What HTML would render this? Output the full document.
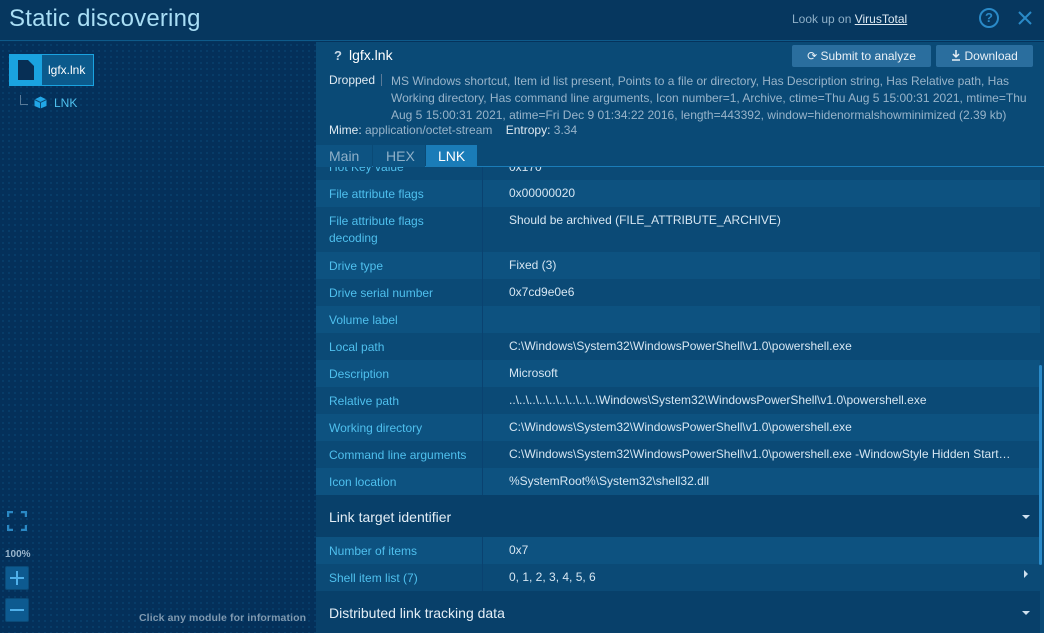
<!DOCTYPE html><html><head><style>
*{margin:0;padding:0;box-sizing:border-box}
body{width:1044px;height:633px;overflow:hidden;background:#05335c;font-family:"Liberation Sans",sans-serif;position:relative}
.hdr{position:absolute;left:0;top:0;width:1044px;height:41px;background:#06375f;border-bottom:1px solid #0e5a8a}
.hdr h1{position:absolute;left:9px;top:5px;font-size:24px;font-weight:normal;color:#a9def5;letter-spacing:0.2px}
.left{position:absolute;left:0;top:42px;width:316px;height:591px;background-color:#04305a;background-image:radial-gradient(#08406c 0.8px,transparent 1px);background-size:6px 6px}
.right{position:absolute;left:316px;top:42px;width:728px;height:591px;background:#0a4a76}
.row{position:absolute;left:316px;width:724px;font-size:12px;color:#d6e6f2}
.row .l{position:absolute;left:13px;color:#4fc0ee}
.row .v{position:absolute;left:193px}
.row .sep{position:absolute;left:166px;top:0;bottom:0;width:1px;background:#0a4270}
.sec{position:absolute;left:316px;width:724px;background:#08406a;color:#e4eef6;font-size:14px}
.sec span{position:absolute;left:13px;top:14px}
.sec i{position:absolute;right:10px;top:20px;border:4px solid transparent;border-top:4px solid #cfe0ee;border-bottom:0}
</style></head><body>
<div class="hdr"><h1>Static discovering</h1>
<div style="position:absolute;left:792px;top:12px;font-size:12px;color:#8fb0c8">Look up on <span style="color:#dde9f2;text-decoration:underline">VirusTotal</span></div>
<div style="position:absolute;left:979px;top:8px;width:20px;height:20px;border:2px solid #2a8ac8;border-radius:50%;color:#2a8ac8;font-size:13px;text-align:center;line-height:16px;font-weight:bold">?</div>
<svg style="position:absolute;left:1018px;top:11px" width="14" height="14"><path d="M1 1L13 13M13 1L1 13" stroke="#2a8ac8" stroke-width="2"/></svg>
</div>
<div class="left">
<div style="position:absolute;left:9px;top:12px;width:85px;height:32px;border:1px solid #1aa3e0;background:#0b5a8c">
<div style="position:absolute;left:0;top:0;width:32px;height:30px;background:#1aa3e0"></div>
<svg style="position:absolute;left:7px;top:4px" width="18" height="22"><path d="M1 1H11L17 7V21H1Z" fill="#072f55"/></svg>
<div style="position:absolute;left:38px;top:8px;color:#fff;font-size:12px">lgfx.lnk</div></div>
<div style="position:absolute;left:20px;top:53px;width:8px;height:10px;border-left:1px solid #5a7a98;border-bottom:1px solid #5a7a98"></div>
<svg style="position:absolute;left:34px;top:54px" width="13" height="13"><path d="M6.5 0.5L12.5 3.5V10L6.5 12.5L0.5 10V3.5Z" fill="#22a6e6"/><path d="M0.5 3.5L6.5 6.5L12.5 3.5M6.5 6.5V12.5" stroke="#0a4a76" stroke-width="1" fill="none"/></svg>
<div style="position:absolute;left:54px;top:54px;font-size:12px;color:#4fc0ee">LNK</div>
<svg style="position:absolute;left:7px;top:469px" width="20" height="20"><path d="M1 6V1H6M14 1H19V6M19 14V19H14M6 19H1V14" stroke="#2a88c4" stroke-width="2.5" fill="none"/></svg>
<div style="position:absolute;left:5px;top:507px;font-size:10px;font-weight:bold;color:#9ab5cc">100%</div>
<div style="position:absolute;left:5px;top:524px;width:24px;height:24px;background:#0d5a90;border:1px solid #0a4a78;border-radius:2px"><svg width="22" height="22"><path d="M11 4V18M4 11H18" stroke="#4fb0ea" stroke-width="2"/></svg></div>
<div style="position:absolute;left:5px;top:556px;width:24px;height:24px;background:#0d5a90;border:1px solid #0a4a78;border-radius:2px"><svg width="22" height="22"><path d="M4 11H18" stroke="#4fb0ea" stroke-width="2"/></svg></div>
<div style="position:absolute;left:139px;top:570px;font-size:10.5px;font-weight:bold;color:#7f99b0;letter-spacing:0.1px">Click any module for information</div>
</div>
<div class="right"></div>
<div style="position:absolute;left:334px;top:48px;font-size:13px;color:#c8d8e6;font-weight:bold">?</div>
<div style="position:absolute;left:349px;top:47px;font-size:14px;color:#fff">lgfx.lnk</div>
<div style="position:absolute;left:792px;top:45px;width:139px;height:22px;background:#2a6e9e;border-radius:2px;color:#e8f0f6;font-size:12px;line-height:22px;text-align:center">⟳ Submit to analyze</div>
<div style="position:absolute;left:936px;top:45px;width:97px;height:22px;background:#2a6e9e;border-radius:2px;color:#e8f0f6;font-size:12px;line-height:22px;text-align:center"><svg width="10" height="12" style="vertical-align:-1px"><path d="M5 1V8M2 5L5 8L8 5M1 11H9" stroke="#e8f0f6" stroke-width="1.5" fill="none"/></svg> Download</div>
<div style="position:absolute;left:329px;top:73px;font-size:12px;color:#e0eaf2">Dropped</div>
<div style="position:absolute;left:381px;top:74px;width:1px;height:12px;background:#5a7a98"></div>
<div style="position:absolute;left:391px;top:73px;white-space:nowrap;font-size:12px;line-height:17px;color:#98b4ca">MS Windows shortcut, Item id list present, Points to a file or directory, Has Description string, Has Relative path, Has<br>Working directory, Has command line arguments, Icon number=1, Archive, ctime=Thu Aug 5 15:00:31 2021, mtime=Thu<br>Aug 5 15:00:31 2021, atime=Fri Dec 9 01:34:22 2016, length=443392, window=hidenormalshowminimized (2.39 kb)</div>
<div style="position:absolute;left:329px;top:123px;font-size:12px;color:#e0eaf2">Mime: <span style="color:#98b4ca">application/octet-stream</span> &nbsp;&nbsp; Entropy: <span style="color:#98b4ca">3.34</span></div>
<div style="position:absolute;left:316px;top:166px;width:728px;height:1px;background:#1a7cb8"></div>
<div style="position:absolute;left:316px;top:145px;width:56px;height:22px;background:#0d5382;color:#8fb0c8;font-size:14px;padding:3px 0 0 13px">Main</div>
<div style="position:absolute;left:373px;top:145px;width:52px;height:22px;background:#0d5382;color:#8fb0c8;font-size:14px;padding:3px 0 0 13px">HEX</div>
<div style="position:absolute;left:426px;top:145px;width:51px;height:22px;background:#1a7cb8;color:#fff;font-size:14px;padding:3px 0 0 12px">LNK</div>
<div class="row" style="top:167px;height:13px;overflow:hidden;background:#0b4a76"><div class="sep"></div><span class="l" style="top:-7px">Hot Key value</span><span class="v" style="top:-7px">0x170</span></div>
<div class="row" style="top:180px;height:27px;background:#0d5280"><div class="sep"></div><span class="l" style="top:7px">File attribute flags</span><span class="v" style="top:6px">0x00000020</span></div>
<div class="row" style="top:207px;height:45px;background:#0b4a76"><div class="sep"></div><span class="l" style="top:6px;line-height:17px">File attribute flags<br>decoding</span><span class="v" style="top:6px">Should be archived (FILE_ATTRIBUTE_ARCHIVE)</span></div>
<div class="row" style="top:252px;height:27px;background:#0d5280"><div class="sep"></div><span class="l" style="top:7px">Drive type</span><span class="v" style="top:6px">Fixed (3)</span></div>
<div class="row" style="top:279px;height:27px;background:#0b4a76"><div class="sep"></div><span class="l" style="top:7px">Drive serial number</span><span class="v" style="top:6px">0x7cd9e0e6</span></div>
<div class="row" style="top:306px;height:27px;background:#0d5280"><div class="sep"></div><span class="l" style="top:7px">Volume label</span></div>
<div class="row" style="top:333px;height:27px;background:#0b4a76"><div class="sep"></div><span class="l" style="top:7px">Local path</span><span class="v" style="top:6px">C:\Windows\System32\WindowsPowerShell\v1.0\powershell.exe</span></div>
<div class="row" style="top:360px;height:27px;background:#0d5280"><div class="sep"></div><span class="l" style="top:7px">Description</span><span class="v" style="top:6px">Microsoft</span></div>
<div class="row" style="top:387px;height:27px;background:#0b4a76"><div class="sep"></div><span class="l" style="top:7px">Relative path</span><span class="v" style="top:6px">..\..\..\..\..\..\..\..\..\Windows\System32\WindowsPowerShell\v1.0\powershell.exe</span></div>
<div class="row" style="top:414px;height:27px;background:#0d5280"><div class="sep"></div><span class="l" style="top:7px">Working directory</span><span class="v" style="top:6px">C:\Windows\System32\WindowsPowerShell\v1.0\powershell.exe</span></div>
<div class="row" style="top:441px;height:27px;background:#0b4a76"><div class="sep"></div><span class="l" style="top:7px">Command line arguments</span><span class="v" style="top:6px">C:\Windows\System32\WindowsPowerShell\v1.0\powershell.exe -WindowStyle Hidden Start…</span></div>
<div class="row" style="top:468px;height:27px;background:#0d5280"><div class="sep"></div><span class="l" style="top:7px">Icon location</span><span class="v" style="top:6px">%SystemRoot%\System32\shell32.dll</span></div>
<div class="sec" style="top:495px;height:42px"><span>Link target identifier</span><i></i></div>
<div class="row" style="top:537px;height:27px;background:#0d5280"><div class="sep"></div><span class="l" style="top:7px">Number of items</span><span class="v" style="top:6px">0x7</span></div>
<div class="row" style="top:564px;height:27px;background:#0b4a76"><div class="sep"></div><span class="l" style="top:7px">Shell item list (7)</span><span class="v" style="top:6px">0, 1, 2, 3, 4, 5, 6</span><span style="position:absolute;left:708px;top:6px;border:4px solid transparent;border-left:4px solid #cfe0ee;border-right:0"></span></div>
<div class="sec" style="top:591px;height:42px"><span>Distributed link tracking data</span><i></i></div>
<div style="position:absolute;left:1039px;top:365px;width:3px;height:200px;background:#2a8ac8;border-radius:2px"></div>
</body></html>
